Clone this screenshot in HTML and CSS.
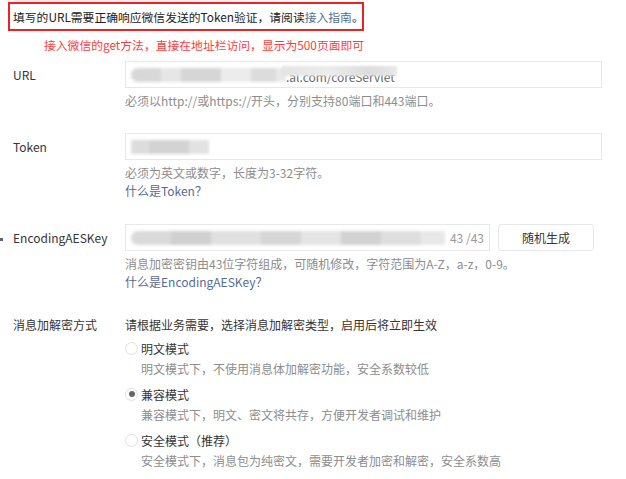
FILE: index.html
```html
<!DOCTYPE html>
<html lang="zh-CN">
<head>
<meta charset="utf-8">
<link rel="stylesheet" href="styles.css">
</head>
<body>
<div class="page">
  <div class="top-cut"></div>
  <div class="notice">填写的URL需要正确响应微信发送的Token验证，请阅读<a class="link">接入指南</a>。</div>
  <div class="red-note">接入微信的get方法，直接在地址栏访问，显示为500页面即可</div>

  <div class="row row-url">
    <div class="label">URL</div>
    <div class="control">
      <div class="input">
        <span class="blur-group">
          <span class="blk b1"></span><span class="blk b2"></span><span class="blk b3"></span><span class="blk b4"></span><span class="blk b5"></span><span class="blk b6"></span>
        </span>
        <span class="url-tail">.al.com/coreServlet</span>
      </div>
      <div class="help">必须以http://或https://开头，分别支持80端口和443端口。</div>
    </div>
  </div>

  <div class="row row-token">
    <div class="label">Token</div>
    <div class="control">
      <div class="input">
        <span class="blur-group">
          <span class="blk t1"></span><span class="blk t2"></span><span class="blk t3"></span>
        </span>
      </div>
      <div class="help">必须为英文或数字，长度为3-32字符。</div>
      <div class="help-link"><a class="link">什么是Token？</a></div>
    </div>
  </div>

  <div class="row row-aes">
    <div class="label"><span class="bullet"></span>EncodingAESKey</div>
    <div class="control">
      <div class="aes-line">
        <div class="input input-aes">
          <span class="blur-group">
            <span class="blk a1"></span><span class="blk a2"></span><span class="blk a3"></span><span class="blk a4"></span><span class="blk a5"></span><span class="blk a6"></span><span class="blk a7"></span><span class="blk a8"></span>
          </span>
          <span class="counter">43 /43</span>
        </div>
        <div class="btn">随机生成</div>
      </div>
      <div class="help">消息加密密钥由43位字符组成，可随机修改，字符范围为A-Z，a-z，0-9。</div>
      <div class="help-link"><a class="link">什么是EncodingAESKey？</a></div>
    </div>
  </div>

  <div class="row row-mode">
    <div class="label label-mode">消息加解密方式</div>
    <div class="control">
      <div class="mode-intro">请根据业务需要，选择消息加解密类型，启用后将立即生效</div>
      <div class="option"><span class="radio"></span><span class="opt-label">明文模式</span></div>
      <div class="opt-desc">明文模式下，不使用消息体加解密功能，安全系数较低</div>
      <div class="option"><span class="radio checked"></span><span class="opt-label">兼容模式</span></div>
      <div class="opt-desc">兼容模式下，明文、密文将共存，方便开发者调试和维护</div>
      <div class="option"><span class="radio"></span><span class="opt-label">安全模式（推荐）</span></div>
      <div class="opt-desc">安全模式下，消息包为纯密文，需要开发者加密和解密，安全系数高</div>
    </div>
  </div>
</div>
</body>
</html>
```

FILE: styles.css
```css
html, body {
  margin: 0;
  padding: 0;
  background: #ffffff;
}
body {
  font-family: "Noto Sans CJK SC", "Open Sans", sans-serif;
  color: #353535;
  font-size: 12px;
}
.page {
  width: 626px;
  height: 479px;
  overflow: hidden;
  position: relative;
}
.top-cut {
  height: 2px;
  margin-left: 14px;
  width: 340px;
  background: linear-gradient(90deg, #e8e8e8, #f2f2f2 60%, #ffffff);
}
.notice {
  margin-left: 8px;
  width: 349px;
  height: 25px;
  border: 2px solid #ee2222;
  box-sizing: content-box;
  padding-left: 3px;
  font-size: 11.8px;
  line-height: 25px;
  color: #222222;
  white-space: nowrap;
}
.link {
  color: #576b95;
  text-decoration: none;
}
.red-note {
  margin-top: 4px;
  padding-left: 44px;
  color: #ff3b3b;
  font-size: 11.8px;
  line-height: 20px;
}
.row {
  display: flex;
}
.label {
  width: 125px;
  padding-left: 13px;
  box-sizing: border-box;
  font-size: 12px;
  color: #353535;
  line-height: 28px;
  flex: none;
  position: relative;
}
.label-mode {
  line-height: 24px;
}
.control {
  width: 477px;
  flex: none;
}
.row-url { margin-top: 6px; }
.row-token { margin-top: 23px; }
.row-aes { margin-top: 24px; }
.row-mode { margin-top: 22px; }

.input {
  height: 27px;
  border: 1px solid #e7e7eb;
  box-sizing: border-box;
  display: flex;
  align-items: center;
  padding: 0 5px;
  position: relative;
  overflow: hidden;
}
.blur-group {
  display: flex;
  filter: blur(1.5px);
  height: 14px;
  flex: none;
}
.blk {
  display: inline-block;
  height: 14px;
}
.b1 { width: 30px; background: #d8d8d8; border-radius: 7px 0 0 7px; }
.b2 { width: 20px; background: #e6e6e6; }
.b3 { width: 40px; background: #d6d6d6; }
.b4 { width: 30px; background: #ececec; }
.b5 { width: 25px; background: #dcdcdc; }
.b6 { width: 10px; background: #e8e8e8; }
.url-tail {
  color: #666;
  font-size: 12px;
  line-height: 14px;
  position: relative;
  margin-top: 4px;
}
.url-tail::before {
  content: "";
  position: absolute;
  left: -4px;
  right: -2px;
  top: -4px;
  height: 10px;
  background: linear-gradient(90deg, #e4e4e4, #ececec 40%, #dcdcdc 75%, #e8e8e8);
  filter: blur(1px);
}
.t1 { width: 18px; background: #dcdcdc; }
.t2 { width: 40px; background: #d3d3d3; }
.t3 { width: 20px; background: #e2e2e2; }

.help {
  color: #8d8d8d;
  font-size: 12px;
  line-height: 18px;
  margin-top: 4px;
}
.help-link {
  font-size: 12px;
  line-height: 18px;
}
.aes-line {
  display: flex;
  gap: 8px;
}
.input-aes {
  width: 365px;
  flex: none;
  justify-content: space-between;
}
.a1 { width: 40px; background: #dadada; border-radius: 7px 0 0 7px; }
.a2 { width: 40px; background: #d0d0d0; }
.a3 { width: 50px; background: #e0e0e0; }
.a4 { width: 40px; background: #d6d6d6; }
.a5 { width: 40px; background: #e4e4e4; }
.a6 { width: 40px; background: #d2d2d2; }
.a7 { width: 40px; background: #dedede; }
.a8 { width: 24px; background: #e8e8e8; }
.counter {
  color: #9a9a9a;
  font-size: 12px;
}
.btn {
  width: 96px;
  height: 27px;
  border: 1px solid #e7e7eb;
  border-radius: 3px;
  box-sizing: border-box;
  display: flex;
  align-items: center;
  justify-content: center;
  color: #353535;
  font-size: 12px;
}
.bullet {
  position: absolute;
  left: 0;
  top: 14px;
  width: 3px;
  height: 3px;
  background: #666;
}
.mode-intro {
  line-height: 24px;
  font-size: 12px;
}
.option {
  display: flex;
  align-items: center;
  height: 22px;
  margin-top: 0;
}
.option + .opt-desc + .option {
  margin-top: 4px;
}
.radio {
  width: 13px;
  height: 13px;
  border: 1px solid #e0e0e0;
  border-radius: 50%;
  box-sizing: border-box;
  margin-right: 3px;
  position: relative;
  flex: none;
}
.radio.checked::after {
  content: "";
  position: absolute;
  left: 2.5px;
  top: 2.5px;
  width: 6px;
  height: 6px;
  border-radius: 50%;
  background: #666;
}
.opt-label {
  font-size: 12px;
  color: #353535;
}
.opt-desc {
  padding-left: 16px;
  color: #8d8d8d;
  font-size: 12px;
  line-height: 20px;
}
```
